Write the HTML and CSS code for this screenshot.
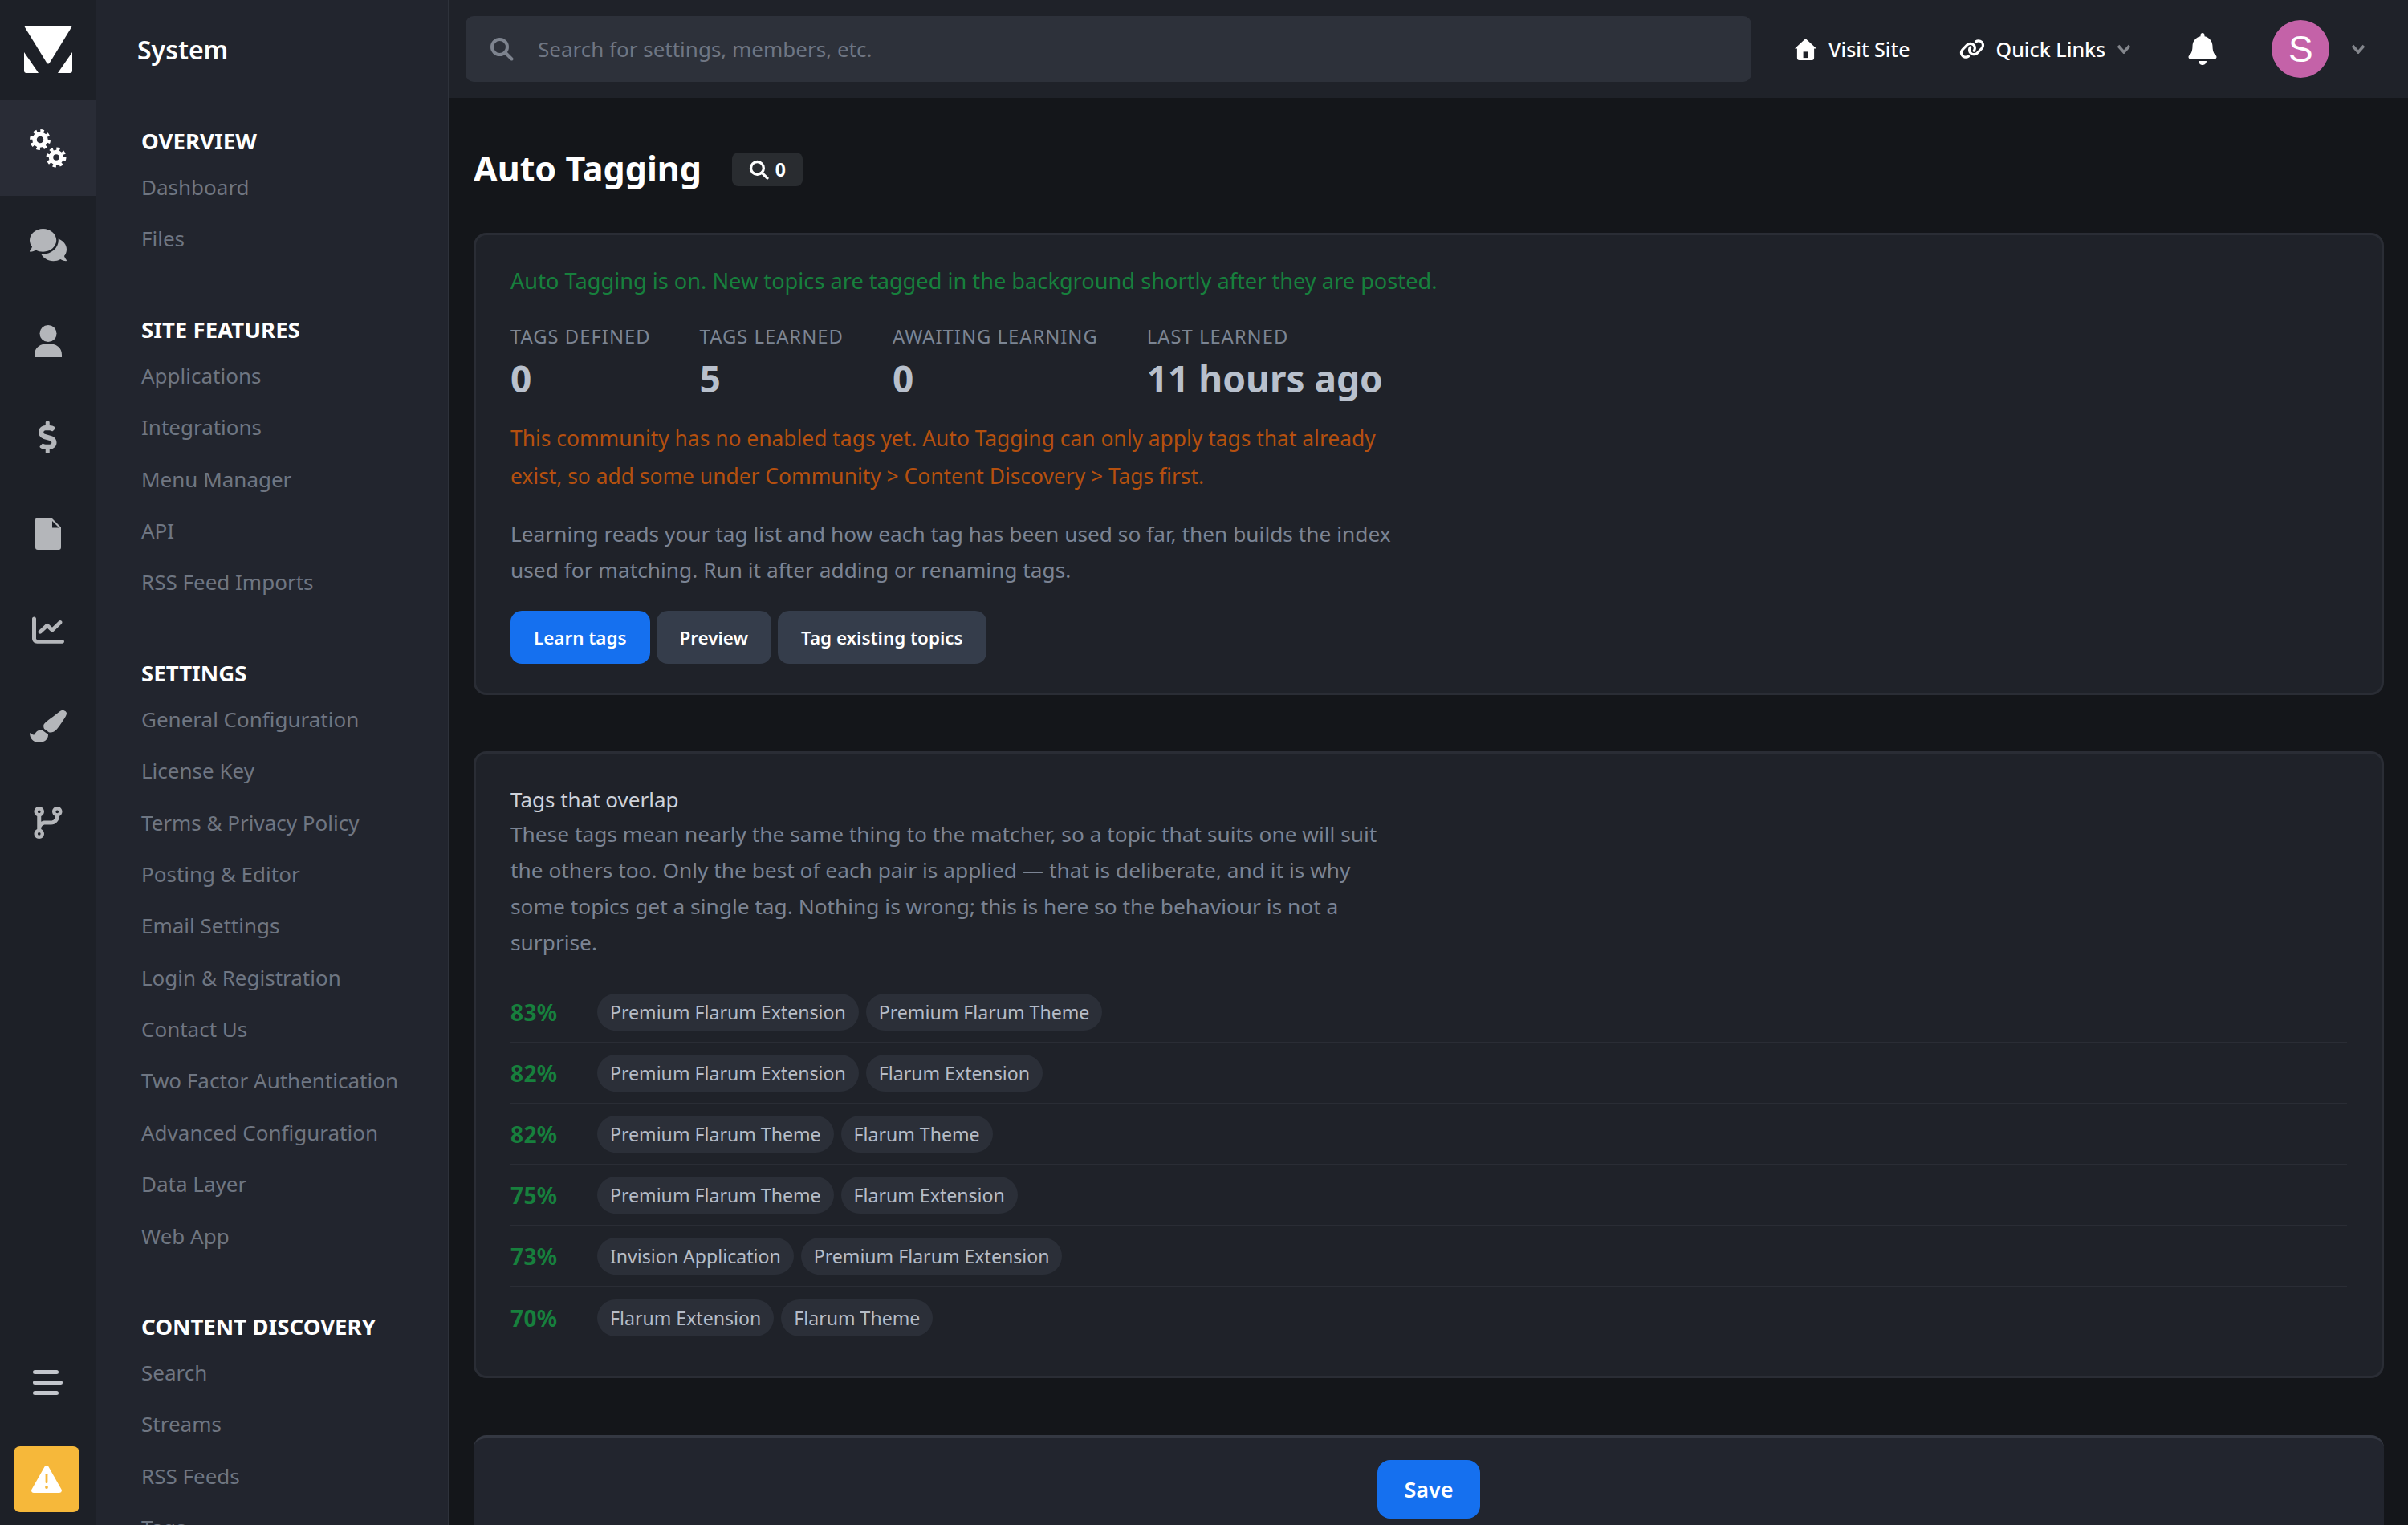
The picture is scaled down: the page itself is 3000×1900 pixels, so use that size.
FILE: index.html
```html
<!DOCTYPE html>
<html lang="en">
<head>
    <meta charset="UTF-8">
    <meta name="viewport" content="width=device-width, initial-scale=1.0">
    <title>Auto Tagging</title>
    <link rel="stylesheet" href="styles.css">
</head>
<body>
    <div class="rail">
        <div class="logo">
            <svg class="logo-mark" viewBox="0 0 60 60"><path d="M2 0H58Q60 0 59 2L32 46Q30 49 28 46L1 2Q0 0 2 0Z"/><path d="M0 33L18 59H3Q0 59 0 56Z"/><path d="M60 33L42 59H57Q60 59 60 56Z"/></svg>
        </div>
        <div class="rail-item active">
            <svg class="ic-gears" viewBox="0 0 48 48">
                <g fill="none" stroke="currentColor"><circle cx="14" cy="13" r="7" stroke-width="5.5"/><circle cx="14" cy="13" r="11" stroke-width="4" stroke-dasharray="4.3 4.34"/><circle cx="34" cy="35" r="6.5" stroke-width="5.5"/><circle cx="34" cy="35" r="10.5" stroke-width="4" stroke-dasharray="4.1 4.15"/></g>
            </svg>
        </div>
        <div class="rail-item">
            <svg class="ic-comments" viewBox="0 0 576 512" preserveAspectRatio="none"><path d="M416 192c0-88.4-93.1-160-208-160S0 103.6 0 192c0 34.3 14.1 65.9 38 92-13.4 30.2-35.5 54.2-35.8 54.5-2.2 2.3-2.8 5.7-1.5 8.7S4.8 352 8 352c36.6 0 66.9-12.3 88.7-25 32.2 15.7 70.3 25 111.3 25 114.9 0 208-71.6 208-160zm122 220c23.9-26 38-57.7 38-92 0-66.9-53.5-124.2-129.3-148.1.9 6.6 1.3 13.3 1.3 20.1 0 105.9-107.7 192-240 192-10.8 0-21.3-.8-31.7-1.9C207.8 439.6 281.8 480 368 480c41 0 79.1-9.2 111.3-25 21.8 12.7 52.1 25 88.7 25 3.2 0 6.1-1.9 7.3-4.8 1.3-2.9.7-6.3-1.5-8.7-.3-.3-22.4-24.2-35.8-54.5z"/></svg>
        </div>
        <div class="rail-item">
            <svg class="ic-user" viewBox="0 0 34 40"><circle cx="17" cy="10.5" r="10.5"/><path d="M0 40V37C0 28 7 23 17 23S34 28 34 37V40Z"/></svg>
        </div>
        <div class="rail-item">
            <svg class="ic-dollar" viewBox="0 0 320 512"><path d="M209.2 233.4l-108-31.6C88.7 198.2 80 186.5 80 173.5c0-16.3 13.2-29.5 29.5-29.5h66.3c12.2 0 24.2 3.7 34.2 10.5 6.1 4.1 14.3 3.1 19.5-2l34.8-34c7.1-6.9 6.1-18.4-1.8-24.5C238 74.8 207.4 64.1 176 64V16c0-8.8-7.2-16-16-16h-32c-8.8 0-16 7.2-16 16v48h-2.5C45.8 64-5.4 118.7.5 183.6c4.2 46.1 39.4 83.6 83.8 96.6l102.5 30c12.5 3.7 21.2 15.3 21.2 28.3 0 16.3-13.2 29.5-29.5 29.5h-66.3C100 368 88 364.3 78 357.5c-6.1-4.1-14.3-3.1-19.5 2l-34.8 34c-7.1 6.9-6.1 18.4 1.8 24.5 24.5 19.2 55.1 29.9 86.5 30v48c0 8.8 7.2 16 16 16h32c8.8 0 16-7.2 16-16v-48.2c46.6-.9 90.3-28.6 105.7-72.7 21.5-61.6-14.6-124.8-72.5-141.7z"/></svg>
        </div>
        <div class="rail-item">
            <svg class="ic-file" viewBox="0 0 32 40"><path d="M3 0H20L32 12V37Q32 40 29 40H3Q0 40 0 37V3Q0 0 3 0Z"/><path class="notch" d="M21 4V12.5H29.5Z"/></svg>
        </div>
        <div class="rail-item">
            <svg class="ic-chart" viewBox="0 0 512 512" preserveAspectRatio="none"><path d="M64 64c0-17.7-14.3-32-32-32S0 46.3 0 64V400c0 44.2 35.8 80 80 80H480c17.7 0 32-14.3 32-32s-14.3-32-32-32H80c-8.8 0-16-7.2-16-16V64zm406.6 86.6c12.5-12.5 12.5-32.8 0-45.3s-32.8-12.5-45.3 0L320 210.7l-57.4-57.4c-12.5-12.5-32.8-12.5-45.3 0l-112 112c-12.5 12.5-12.5 32.8 0 45.3s32.8 12.5 45.3 0L240 221.3l57.4 57.4c12.5 12.5 32.8 12.5 45.3 0l128-128z"/></svg>
        </div>
        <div class="rail-item">
            <svg class="ic-brush" viewBox="0 0 512 512" preserveAspectRatio="none"><path d="M167.02 309.34c-40.12 2.58-76.53 17.86-97.19 72.3-2.35 6.21-8 9.98-14.59 9.98-11.11 0-45.46-27.67-55.25-34.35C0 439.62 37.93 512 128 512c75.86 0 128-43.77 128-120.19 0-3.11-.65-6.08-.97-9.13l-88.01-73.34zM457.89 0c-15.16 0-29.37 6.71-40.21 16.45C213.27 199.05 192 203.34 192 257.09c0 13.7 3.25 26.76 8.73 38.7l63.82 53.18c7.21 1.8 14.64 3.03 22.39 3.03 62.11 0 98.11-45.47 211.16-256.46 7.38-14.35 13.9-29.85 13.9-45.99C512 20.64 486 0 457.89 0z"/></svg>
        </div>
        <div class="rail-item">
            <svg class="ic-branch" viewBox="0 0 448 512"><path d="M80 104a24 24 0 1 0 0-48 24 24 0 1 0 0 48zm80-24c0 32.8-19.7 61-48 73.3v87.8c18.8-10.9 40.7-17.1 64-17.1h96c35.3 0 64-28.7 64-64v-6.7C307.7 141 288 112.8 288 80c0-44.2 35.8-80 80-80s80 35.8 80 80c0 32.8-19.7 61-48 73.3V160c0 70.7-57.3 128-128 128H176c-35.3 0-64 28.7-64 64v6.7c28.3 12.3 48 40.5 48 73.3c0 44.2-35.8 80-80 80s-80-35.8-80-80c0-32.8 19.7-61 48-73.3V352 153.3C19.7 141 0 112.8 0 80C0 35.8 35.8 0 80 0s80 35.8 80 80zm232 0a24 24 0 1 0 -48 0 24 24 0 1 0 48 0zM80 456a24 24 0 1 0 0-48 24 24 0 1 0 0 48z"/></svg>
        </div>
        <div class="rail-bottom">
            <div class="bars"><span></span><span class="long"></span><span></span></div>
            <div class="warn">
                <svg class="ic-warn" viewBox="0 0 38 34"><path d="M16.5 1.5Q19 -1 21.5 1.5L37.4 29.5Q39 33.5 35 34H3Q-1 33.5 .6 29.5Z"/><rect class="warn-mark" x="17.6" y="10" width="2.8" height="12" rx="1.2"/><circle class="warn-mark" cx="19" cy="27" r="1.9"/></svg>
            </div>
        </div>
    </div>

    <div class="sidebar">
        <div class="sidebar-title">System</div>
        <div class="nav-section">
            <div class="nav-heading">OVERVIEW</div>
            <div class="nav-link">Dashboard</div>
            <div class="nav-link">Files</div>
        </div>
        <div class="nav-section">
            <div class="nav-heading">SITE FEATURES</div>
            <div class="nav-link">Applications</div>
            <div class="nav-link">Integrations</div>
            <div class="nav-link">Menu Manager</div>
            <div class="nav-link">API</div>
            <div class="nav-link">RSS Feed Imports</div>
        </div>
        <div class="nav-section">
            <div class="nav-heading">SETTINGS</div>
            <div class="nav-link">General Configuration</div>
            <div class="nav-link">License Key</div>
            <div class="nav-link">Terms &amp; Privacy Policy</div>
            <div class="nav-link">Posting &amp; Editor</div>
            <div class="nav-link">Email Settings</div>
            <div class="nav-link">Login &amp; Registration</div>
            <div class="nav-link">Contact Us</div>
            <div class="nav-link">Two Factor Authentication</div>
            <div class="nav-link">Advanced Configuration</div>
            <div class="nav-link">Data Layer</div>
            <div class="nav-link">Web App</div>
        </div>
        <div class="nav-section">
            <div class="nav-heading">CONTENT DISCOVERY</div>
            <div class="nav-link">Search</div>
            <div class="nav-link">Streams</div>
            <div class="nav-link">RSS Feeds</div>
            <div class="nav-link">Tags</div>
        </div>
    </div>

    <div class="page">
        <div class="topbar">
            <div class="search">
                <svg class="ic-search" viewBox="0 0 30 30"><circle cx="12.5" cy="12.5" r="9.5"/><path d="M19.5 19.5L27.5 27.5"/></svg>
                <span>Search for settings, members, etc.</span>
            </div>
            <div class="top-link visit">
                <svg class="ic-home" viewBox="0 0 28 28"><path d="M14 0L28 13H25V25Q25 28 22 28H6Q3 28 3 25V13H0Z"/><rect class="home-door" x="11" y="17" width="6" height="8"/></svg>
                Visit Site
            </div>
            <div class="top-link quick">
                <svg class="ic-link" viewBox="0 0 640 512"><path d="M579.8 267.7c56.5-56.5 56.5-148 0-204.5c-50-50-128.8-56.5-186.3-15.4l-1.6 1.1c-14.4 10.3-17.7 30.3-7.4 44.6s30.3 17.7 44.6 7.4l1.6-1.1c32.1-22.9 76-19.3 103.8 8.6c31.5 31.5 31.5 82.5 0 114L422.3 334.8c-31.5 31.5-82.5 31.5-114 0c-27.9-27.9-31.5-71.8-8.6-103.8l1.1-1.6c10.3-14.4 6.9-34.4-7.4-44.6s-34.4-6.9-44.6 7.4l-1.1 1.6C206.5 251.2 213 330 263 380c56.5 56.5 148 56.5 204.5 0L579.8 267.7zM60.2 244.3c-56.5 56.5-56.5 148 0 204.5c50 50 128.8 56.5 186.3 15.4l1.6-1.1c14.4-10.3 17.7-30.3 7.4-44.6s-30.3-17.7-44.6-7.4l-1.6 1.1c-32.1 22.9-76 19.3-103.8-8.6C74 372 74 321 105.5 289.5L217.7 177.2c31.5-31.5 82.5-31.5 114 0c27.9 27.9 31.5 71.8 8.6 103.9l-1.1 1.6c-10.3 14.4-6.9 34.4 7.4 44.6s34.4 6.9 44.6-7.4l1.1-1.6C433.5 260.8 427 182 377 132c-56.5-56.5-148-56.5-204.5 0L60.2 244.3z"/></svg>
                Quick Links
                <svg class="caret" viewBox="0 0 18 12"><path d="M2 2L9 10L16 2"/></svg>
            </div>
            <svg class="ic-bell" viewBox="0 0 448 512"><path d="M224 512c35.32 0 63.97-28.65 63.97-64H160.03c0 35.35 28.65 64 63.97 64zm215.39-149.71c-19.32-20.76-55.47-51.99-55.47-154.29 0-77.7-54.48-139.9-127.94-155.16V32c0-17.67-14.32-32-31.98-32s-31.98 14.33-31.98 32v20.84C118.56 68.1 64.08 130.3 64.08 208c0 102.3-36.15 133.53-55.47 154.29-6 6.45-8.66 14.16-8.61 21.71.11 16.4 12.98 32 32.1 32h383.8c19.12 0 32-15.6 32.1-32 .05-7.55-2.61-15.27-8.61-21.71z"/></svg>
            <div class="avatar">S</div>
            <svg class="caret" viewBox="0 0 18 12"><path d="M2 2L9 10L16 2"/></svg>
        </div>

        <div class="content">
            <div class="page-head">
                <h1>Auto Tagging</h1>
                <div class="count-badge">
                    <svg class="ic-search-small" viewBox="0 0 30 30"><circle cx="12.5" cy="12.5" r="9.5"/><path d="M19.5 19.5L27.5 27.5"/></svg>
                    0
                </div>
            </div>

            <div class="card status-card">
                <div class="status-on">Auto Tagging is on. New topics are tagged in the background shortly after they are posted.</div>
                <div class="stats">
                    <div class="stat"><div class="stat-label">TAGS DEFINED</div><div class="stat-value">0</div></div>
                    <div class="stat"><div class="stat-label">TAGS LEARNED</div><div class="stat-value">5</div></div>
                    <div class="stat"><div class="stat-label">AWAITING LEARNING</div><div class="stat-value">0</div></div>
                    <div class="stat"><div class="stat-label">LAST LEARNED</div><div class="stat-value">11 hours ago</div></div>
                </div>
                <p class="notice">This community has no enabled tags yet. Auto Tagging can only apply tags that already exist, so add some under Community &gt; Content Discovery &gt; Tags first.</p>
                <p class="help">Learning reads your tag list and how each tag has been used so far, then builds the index used for matching. Run it after adding or renaming tags.</p>
                <div class="actions">
                    <button class="btn btn-primary">Learn tags</button>
                    <button class="btn">Preview</button>
                    <button class="btn">Tag existing topics</button>
                </div>
            </div>

            <div class="card overlap-card">
                <div class="overlap-title">Tags that overlap</div>
                <p class="help overlap-help">These tags mean nearly the same thing to the matcher, so a topic that suits one will suit the others too. Only the best of each pair is applied — that is deliberate, and it is why some topics get a single tag. Nothing is wrong; this is here so the behaviour is not a surprise.</p>
                <div class="overlap-list">
                    <div class="overlap-row"><span class="pct">83%</span><span class="pill">Premium Flarum Extension</span><span class="pill">Premium Flarum Theme</span></div>
                    <div class="overlap-row"><span class="pct">82%</span><span class="pill">Premium Flarum Extension</span><span class="pill">Flarum Extension</span></div>
                    <div class="overlap-row"><span class="pct">82%</span><span class="pill">Premium Flarum Theme</span><span class="pill">Flarum Theme</span></div>
                    <div class="overlap-row"><span class="pct">75%</span><span class="pill">Premium Flarum Theme</span><span class="pill">Flarum Extension</span></div>
                    <div class="overlap-row"><span class="pct">73%</span><span class="pill">Invision Application</span><span class="pill">Premium Flarum Extension</span></div>
                    <div class="overlap-row"><span class="pct">70%</span><span class="pill">Flarum Extension</span><span class="pill">Flarum Theme</span></div>
                </div>
            </div>

            <div class="save-bar">
                <button class="btn btn-primary btn-save">Save</button>
            </div>
        </div>
    </div>
</body>
</html>
```

FILE: styles.css
```css
body {
    margin: 0;
    height: 100vh;
    overflow: hidden;
    display: flex;
    background: #14161a;
    color: #fff;
    font-family: "Noto Sans", "Open Sans", sans-serif;
    font-size: 26px;
}
svg {
    display: block;
    fill: currentColor;
}

/* icon rail */
.rail {
    width: 120px;
    flex-shrink: 0;
    display: flex;
    flex-direction: column;
    background: #1d2027;
    color: #b4b6ba;
}
.logo {
    height: 124px;
    display: flex;
    align-items: center;
    justify-content: center;
    color: #fff;
}
.logo-mark {
    width: 60px;
    height: 60px;
}
.rail-item {
    height: 120px;
    flex-shrink: 0;
    display: flex;
    align-items: center;
    justify-content: center;
}
.rail-item svg {
    margin-top: 2px;
}
.rail-item.active {
    background: #292c36;
    color: #fff;
}
.ic-gears { width: 48px; height: 48px; }
.ic-comments { width: 46px; height: 46px; }
.ic-user { width: 34px; height: 40px; }
.ic-dollar { width: 25px; height: 40px; }
.ic-file { width: 32px; height: 40px; }
.ic-file .notch { fill: #1d2027; }
.ic-chart { width: 40px; height: 38px; }
.ic-brush { width: 46px; height: 40px; }
.ic-branch { width: 36px; height: 40px; }
.rail-bottom {
    margin-top: auto;
    padding-bottom: 16px;
    display: flex;
    flex-direction: column;
    align-items: center;
}
.bars {
    width: 37px;
    display: flex;
    flex-direction: column;
    gap: 8px;
    margin-bottom: 64px;
    margin-right: 2px;
}
.bars span {
    display: block;
    width: 32px;
    height: 5px;
    border-radius: 3px;
    background: #c3c6cc;
}
.bars span.long {
    width: 37px;
}
.warn {
    width: 82px;
    height: 82px;
    margin-right: 4px;
    border-radius: 8px;
    background: #f6b83a;
    display: flex;
    align-items: center;
    justify-content: center;
}
.ic-warn { width: 38px; height: 34px; color: #fff; }
.warn-mark { fill: #f6b83a; }

/* sidebar */
.sidebar {
    width: 440px;
    flex-shrink: 0;
    box-sizing: border-box;
    background: #22252e;
    border-right: 2px solid #2e323b;
    overflow: hidden;
    padding-left: 56px;
}
.sidebar-title {
    height: 124px;
    margin-left: -5px;
    margin-bottom: 25px;
    line-height: 124px;
    font-size: 32px;
    font-weight: 600;
}
.nav-section {
    margin-bottom: 54px;
}
.nav-heading {
    height: 52px;
    line-height: 52px;
    font-size: 27.6px;
    font-weight: 700;
}
.nav-link {
    height: 64.4px;
    line-height: 64.4px;
    color: #6f7682;
}

/* top bar */
.page {
    flex: 1;
    min-width: 0;
    display: flex;
    flex-direction: column;
}
.topbar {
    height: 122px;
    flex-shrink: 0;
    box-sizing: border-box;
    padding: 20px 0 20px 20px;
    display: flex;
    align-items: center;
    background: #1f2229;
}
.search {
    width: 1602px;
    height: 82px;
    box-sizing: border-box;
    padding-left: 30px;
    display: flex;
    align-items: center;
    gap: 30px;
    border-radius: 10px;
    background: #2d313a;
    color: #6f7683;
}
.ic-search {
    width: 30px;
    height: 30px;
    color: #7d838e;
    fill: none;
    stroke: currentColor;
    stroke-width: 4;
    stroke-linecap: round;
}
.top-link {
    display: flex;
    align-items: center;
    font-weight: 500;
    font-size: 25px;
}
.visit {
    margin-left: 54px;
    gap: 15px;
}
.ic-home { width: 27px; height: 27px; }
.home-door { fill: #1f2229; }
.quick {
    margin-left: 61px;
    gap: 14px;
}
.ic-link { width: 32px; height: 26px; }
.caret {
    width: 18px;
    height: 12px;
    fill: none;
    stroke: #83868c;
    stroke-width: 3.5;
}
.ic-bell {
    width: 36px;
    height: 40px;
    margin-left: 71px;
}
.avatar {
    width: 72px;
    height: 72px;
    margin-left: 68px;
    margin-right: 27px;
    border-radius: 50%;
    background: #c462a8;
    display: flex;
    align-items: center;
    justify-content: center;
    font-family: "Liberation Sans", Arial, sans-serif;
    font-size: 46px;
}

/* content */
.content {
    flex: 1;
    padding: 0 30px;
    min-height: 0;
}
.page-head {
    height: 168px;
    box-sizing: border-box;
    padding-top: 6px;
    display: flex;
    align-items: center;
    gap: 38px;
}
h1 {
    margin: 0;
    font-size: 43px;
    font-weight: 700;
}
.count-badge {
    width: 88px;
    height: 42px;
    box-sizing: border-box;
    margin-top: 4px;
    display: flex;
    align-items: center;
    justify-content: center;
    gap: 8px;
    border-radius: 8px;
    background: #292c30;
    font-weight: 700;
    font-size: 23px;
}
.ic-search-small {
    width: 25px;
    height: 25px;
    fill: none;
    stroke: currentColor;
    stroke-width: 4;
    stroke-linecap: round;
}
.card {
    background: #1f2229;
    border: 3px solid #2a2d35;
    border-radius: 16px;
    box-sizing: border-box;
    padding: 0 43px;
}
.status-card {
    height: 576px;
    padding-top: 37px;
    margin-bottom: 70px;
}
.status-on {
    line-height: 40px;
    font-size: 27.2px;
    color: #17803d;
}
.stats {
    display: flex;
    gap: 61px;
    margin-top: 34px;
}
.stat-label {
    line-height: 30px;
    font-size: 23.8px;
    letter-spacing: 1px;
    color: #7c8593;
}
.stat-value {
    margin-top: 6px;
    line-height: 62px;
    font-size: 46px;
    font-weight: 700;
    color: #b8c0cc;
}
.notice, .help {
    margin: 0;
    width: 1110px;
}
.notice {
    margin-top: 21px;
    line-height: 47px;
    font-size: 26.4px;
    color: #b5500f;
}
.help {
    margin-top: 26px;
    line-height: 45px;
    font-size: 26.3px;
    color: #7b8494;
}
.actions {
    display: flex;
    gap: 8px;
    margin-top: 28px;
}
.btn {
    height: 66px;
    padding: 0 29px;
    border: none;
    border-radius: 14px;
    background: #353d4b;
    color: #fff;
    font-family: inherit;
    font-size: 22.4px;
    font-weight: 600;
}
.btn-primary {
    background: #1570ef;
}
.overlap-card {
    height: 781px;
    padding-top: 36px;
    margin-bottom: 71px;
}
.overlap-title {
    line-height: 42px;
    color: #cfd3da;
}
.overlap-help {
    margin-top: 0;
}
.overlap-list {
    margin-top: 27px;
}
.overlap-row {
    display: flex;
    align-items: center;
    gap: 9px;
    height: 76px;
    box-sizing: border-box;
    border-bottom: 2px solid #2a2d35;
}
.overlap-row:last-child {
    border-bottom: none;
}
.pct {
    width: 99px;
    font-weight: 700;
    font-size: 28px;
    letter-spacing: .4px;
    color: #17803d;
}
.pill {
    height: 46px;
    padding: 0 16px;
    line-height: 46px;
    border-radius: 23px;
    background: #2b2f38;
    color: #b5bcc7;
    font-size: 23.1px;
}

/* save bar */
.save-bar {
    height: 200px;
    display: flex;
    justify-content: center;
    padding-top: 27px;
    box-sizing: border-box;
    background: #22252e;
    border-top: 4px solid #343842;
    border-radius: 16px 16px 0 0;
}
.btn-save {
    width: 128px;
    height: 73px;
    padding: 0;
    border-radius: 16px;
    font-size: 27px;
}
```
